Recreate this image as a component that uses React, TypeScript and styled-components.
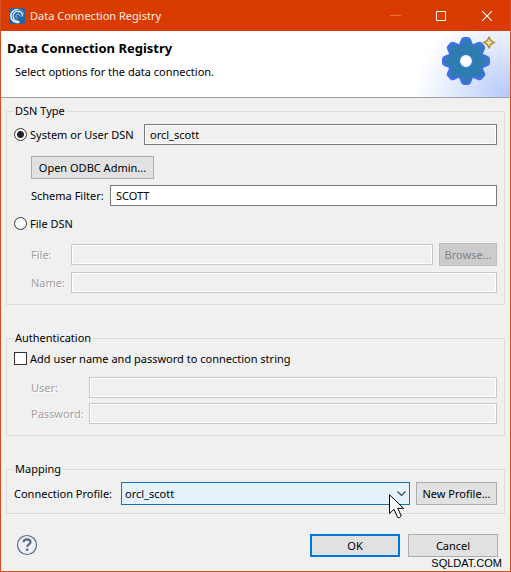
import React, { useState } from "react";
import styled, { createGlobalStyle, css } from "styled-components";

const GlobalStyle = createGlobalStyle`
  *, *::before, *::after { box-sizing: border-box; }
  body { margin: 0; background: #f0f0f0; }
  body, button, input, select {
    font-family: "Noto Sans", "Open Sans", sans-serif;
    font-size: 11px;
    line-height: 16px;
    color: #000;
  }
`;

const Dialog = styled.main`
  position: relative;
  display: flex;
  flex-direction: column;
  min-height: 100vh;
  border: 1px solid #d2501f;
  border-top: 0;
  background: #f0f0f0;
`;

const TitleBar = styled.div`
  display: flex;
  align-items: center;
  height: 31px;
  padding-left: 8px;
  background: #da3b01;
  color: #fff;
`;

const TitleText = styled.span`
  flex: 1;
  margin-left: 5px;
  color: #ffeee6;
`;

const CaptionButton = styled.button`
  display: flex;
  align-items: center;
  justify-content: center;
  width: 46px;
  height: 31px;
  padding: 0;
  border: 0;
  background: transparent;
  color: #fff;

  &:disabled { color: #e8733f; }
`;

const Banner = styled.header`
  display: flex;
  justify-content: space-between;
  height: 67px;
  border-bottom: 1px solid #a0a0a0;
  background: radial-gradient(ellipse 96px 90px at 100% 100%, #b4c8fb 0%, #dbe5fd 50%, #fff 100%) #fff;
`;

const BannerText = styled.div`
  padding: 9px 0 0 6px;
`;

const Heading = styled.h1`
  margin: 0;
  font-size: 13px;
  line-height: 16px;
  font-weight: 700;
`;

const Subheading = styled.p`
  margin: 8px 0 0 8px;
`;

const Form = styled.form`
  display: flex;
  flex-direction: column;
  gap: 25px;
  padding: 5px 5px 0;
`;

const Group = styled.fieldset<{ $bottom: number }>`
  min-width: 0;
  margin: 0;
  padding: 0 7px ${(p) => p.$bottom}px;
  border: 1px solid #dcdcdc;
`;

const Legend = styled.legend`
  height: 16px;
  padding: 0 2px 0 1px;
`;

const Row = styled.div<{ $top: number; $indent?: boolean }>`
  display: flex;
  align-items: center;
  margin-top: ${(p) => p.$top}px;
  padding-left: ${(p) => (p.$indent ? 17 : 0)}px;
`;

const Label = styled.label<{ $width?: number; $dim?: boolean }>`
  flex: none;
  width: ${(p) => (p.$width ? `${p.$width}px` : "auto")};
  white-space: nowrap;
  ${(p) =>
    p.$dim &&
    css`
      color: #a0a0a0;
      text-shadow: 1px 1px 0 #fff;
    `}
`;

const Choice = styled.label<{ $width?: number }>`
  display: flex;
  align-items: center;
  gap: 3px;
  flex: none;
  width: ${(p) => (p.$width ? `${p.$width}px` : "auto")};
  height: 21px;
  white-space: nowrap;
`;

const markBox = css`
  appearance: none;
  flex: none;
  width: 13px;
  height: 13px;
  margin: 0;
  border: 1px solid #333;
  background: #fff;
`;

const Radio = styled.input.attrs({ type: "radio" })`
  ${markBox}
  border-radius: 50%;

  &:checked {
    background: radial-gradient(circle, #222 0, #222 3px, #fff 4px);
  }
`;

const Checkbox = styled.input.attrs({ type: "checkbox" })`
  ${markBox}

  &:checked { box-shadow: inset 0 0 0 2px #fff; background: #333; }
`;

const TextBox = styled.input.attrs({ type: "text" })`
  flex: 1;
  min-width: 0;
  height: 21px;
  padding: 0 5px;
  border: 1px solid #7a7a7a;
  border-radius: 0;
  outline: 0;
  background: #fff;

  &:read-only, &:disabled {
    background: #f0f0f0;
    box-shadow: inset 0 0 0 1px #fff;
  }
  &:disabled { border-color: #c8c8c8; }
`;

const PushButton = styled.button<{ $width: number; $primary?: boolean }>`
  flex: none;
  width: ${(p) => p.$width}px;
  height: 23px;
  padding: 0;
  border: ${(p) => (p.$primary ? "2px solid #0078d7" : "1px solid #adadad")};
  background: #e1e1e1;
  white-space: nowrap;

  &:disabled {
    border-color: #bfbfbf;
    background: #cccccc;
    color: #838383;
  }
`;

const Gap = styled.span`
  flex: none;
  width: 6px;
`;

const SelectBox = styled.div`
  position: relative;
  flex: 1;
  display: flex;
`;

const Select = styled.select`
  appearance: none;
  width: 100%;
  height: 23px;
  padding: 0 20px 0 3px;
  border: 1px solid #0f74bd;
  border-radius: 0;
  outline: 0;
  background: #e5f1fb;
`;

const Chevron = styled.svg`
  position: absolute;
  top: 9px;
  right: 4px;
  pointer-events: none;
`;

const Pointer = styled.svg`
  position: absolute;
  top: 12px;
  right: 5px;
  pointer-events: none;
`;

const Footer = styled.footer`
  display: flex;
  align-items: center;
  gap: 8px;
  padding: 20px 12px 14px 15px;
`;

const HelpButton = styled.button`
  display: flex;
  margin: -1px auto 0 0;
  padding: 0;
  border: 0;
  background: transparent;
`;

const Credit = styled.span`
  position: absolute;
  right: 8px;
  bottom: 2px;
  font-family: "Liberation Sans", Arial, sans-serif;
  font-size: 11px;
  line-height: 12px;
`;

const AppIcon = () => (
  <svg width="16" height="16" viewBox="0 0 16 16" fill="none" strokeLinecap="round" aria-hidden="true">
    <rect width="16" height="16" rx="2" fill="#2565a5" />
    <path d="M10 14.2C5.5 15.300 1.600 12 1.800 7.500C2 4 5 1.500 8.500 1.600" stroke="#e9f4fb" strokeWidth="1.500" />
    <path d="M9.500 13.500C6 13 4 11 4.100 7.700C4.200 4.800 6.700 3.200 9.500 3.500C12 3.700 13.600 5.500 13.300 8" stroke="#e1eff8" strokeWidth="1.300" />
    <path d="M8 10.500C6.700 9.500 6.500 7.500 7.800 6.400C9.200 5.400 11 6.200 11 8" stroke="#a9cde6" strokeWidth="1" />
    <path d="M9 1.700C12 1.500 14.300 3.500 14.500 6" stroke="#a9cde6" strokeWidth="0.800" />
  </svg>
);

const toothAngles = [0, 45, 90, 135, 180, 225, 270, 315];

const GearArt = () => (
  <svg width="68" height="66" viewBox="0 0 68 66" aria-hidden="true">
    <defs>
      <radialGradient id="gearFill" gradientUnits="userSpaceOnUse" cx="24" cy="30" r="25">
        <stop offset="0" stopColor="#2b7fae" />
        <stop offset="0.650" stopColor="#2f7cb0" />
        <stop offset="1" stopColor="#3a78c8" />
      </radialGradient>
    </defs>
    <g fill="#3e70e6" stroke="#3e70e6" strokeWidth="2" strokeLinejoin="round">
      <circle cx="24" cy="30" r="17" />
      {toothAngles.map((a) => (
        <path key={a} d="M17 16L19.800 9Q20.300 7 22 7H26Q27.700 7 28.200 9L31 16Z" transform={`rotate(${a} 24 30)`} />
      ))}
    </g>
    <g fill="url(#gearFill)">
      <circle cx="24" cy="30" r="16.500" />
      {toothAngles.map((a) => (
        <path key={a} d="M18 17L21 9.500Q21.500 8 22.500 8H25.500Q26.500 8 27 9.500L30 17Z" transform={`rotate(${a} 24 30)`} />
      ))}
    </g>
    <circle cx="24" cy="30" r="6.500" fill="#fff" stroke="#3e70e6" strokeWidth="1.200" />
    <path d="M47 6L49 9.500L52.500 11.500L49 13.500L47 17L45 13.500L41.500 11.500L45 9.500Z" fill="#dcbb62" stroke="#a88a3c" strokeWidth="1.200" />
    <path d="M47 9V14M44.500 11.500H49.500" stroke="#fff7cf" strokeWidth="1" />
  </svg>
);

export default function App() {
  const [source, setSource] = useState("system");
  const [schema, setSchema] = useState("SCOTT");
  const [credentials, setCredentials] = useState(false);
  const fileOff = source !== "file";

  return (
    <>
      <GlobalStyle />
      <Dialog>
        <TitleBar>
          <AppIcon />
          <TitleText>Data Connection Registry</TitleText>
          <CaptionButton type="button" aria-label="Minimize" disabled>
            <svg width="11" height="11" viewBox="0 0 11 11" aria-hidden="true">
              <path d="M0 5.500H11" stroke="currentColor" />
            </svg>
          </CaptionButton>
          <CaptionButton type="button" aria-label="Maximize">
            <svg width="10" height="10" viewBox="0 0 10 10" fill="none" aria-hidden="true">
              <path d="M.5.5H9.500V9.500H.5Z" stroke="currentColor" />
            </svg>
          </CaptionButton>
          <CaptionButton type="button" aria-label="Close">
            <svg width="10" height="10" viewBox="0 0 10 10" fill="none" aria-hidden="true">
              <path d="M0 0L10 10M10 0L0 10" stroke="currentColor" strokeWidth="1.100" />
            </svg>
          </CaptionButton>
        </TitleBar>

        <Banner>
          <BannerText>
            <Heading>Data Connection Registry</Heading>
            <Subheading>Select options for the data connection.</Subheading>
          </BannerText>
          <GearArt />
        </Banner>

        <Form id="registry" onSubmit={(e) => e.preventDefault()}>
          <Group $bottom={11}>
            <Legend>DSN Type</Legend>
            <Row $top={5}>
              <Choice $width={130}>
                <Radio name="source" checked={source === "system"} onChange={() => setSource("system")} />
                System or User DSN
              </Choice>
              <TextBox aria-label="System or User DSN name" value="orcl_scott" readOnly />
            </Row>
            <Row $top={11} $indent>
              <PushButton type="button" $width={123}>Open ODBC Admin...</PushButton>
            </Row>
            <Row $top={6} $indent>
              <Label htmlFor="schema" $width={79}>Schema Filter:</Label>
              <TextBox id="schema" value={schema} onChange={(e) => setSchema(e.target.value)} />
            </Row>
            <Row $top={7}>
              <Choice>
                <Radio name="source" checked={source === "file"} onChange={() => setSource("file")} />
                File DSN
              </Choice>
            </Row>
            <Row $top={9} $indent>
              <Label htmlFor="file" $width={40} $dim={fileOff}>File:</Label>
              <TextBox id="file" disabled={fileOff} />
              <Gap />
              <PushButton type="button" $width={58} disabled={fileOff}>Browse...</PushButton>
            </Row>
            <Row $top={6} $indent>
              <Label htmlFor="name" $width={40} $dim={fileOff}>Name:</Label>
              <TextBox id="name" disabled={fileOff} />
            </Row>
          </Group>

          <Group $bottom={11}>
            <Legend>Authentication</Legend>
            <Row $top={2}>
              <Choice>
                <Checkbox checked={credentials} onChange={(e) => setCredentials(e.target.checked)} />
                Add user name and password to connection string
              </Choice>
            </Row>
            <Row $top={8} $indent>
              <Label htmlFor="user" $width={58} $dim={!credentials}>User:</Label>
              <TextBox id="user" disabled={!credentials} />
            </Row>
            <Row $top={5} $indent>
              <Label htmlFor="password" $width={58} $dim={!credentials}>Password:</Label>
              <TextBox id="password" disabled={!credentials} />
            </Row>
          </Group>

          <Group $bottom={8}>
            <Legend>Mapping</Legend>
            <Row $top={5}>
              <Label htmlFor="profile" $width={107}>Connection Profile:</Label>
              <SelectBox>
                <Select id="profile" defaultValue="orcl_scott">
                  <option value="orcl_scott">orcl_scott</option>
                </Select>
                <Chevron width="9" height="6" viewBox="0 0 9 6" fill="none" aria-hidden="true">
                  <path d="M.5.5L4.500 4.500L8.500.5" stroke="#444" strokeWidth="1.200" />
                </Chevron>
                <Pointer width="16" height="25" viewBox="0 0 16 25" aria-hidden="true">
                  <path d="M.5.7V19.500L5 15.300L8.700 23.500Q10.500 24.500 12.300 22L8.700 14.300H14.500Z" fill="#fff" stroke="#000" />
                </Pointer>
              </SelectBox>
              <Gap />
              <PushButton type="button" $width={81}>New Profile...</PushButton>
            </Row>
          </Group>
        </Form>

        <Footer>
          <HelpButton type="button" aria-label="Help">
            <svg width="22" height="22" viewBox="0 0 22 22" fill="none" aria-hidden="true">
              <circle cx="11" cy="11" r="9.500" fill="#eef1f6" stroke="#5b6b85" strokeWidth="1.200" />
              <path d="M7.500 8.300C7.600 6.300 9 5.300 11 5.300C13.200 5.300 14.500 6.400 14.500 8.100C14.500 10.500 11.200 10.400 11.200 13" stroke="#5b6b85" strokeWidth="2.200" />
              <path d="M10 14.500H12.400V16.800H10Z" fill="#5b6b85" />
            </svg>
          </HelpButton>
          <PushButton type="submit" form="registry" $width={90} $primary>OK</PushButton>
          <PushButton type="button" $width={90}>Cancel</PushButton>
        </Footer>
        <Credit>SQLDAT.COM</Credit>
      </Dialog>
    </>
  );
}
